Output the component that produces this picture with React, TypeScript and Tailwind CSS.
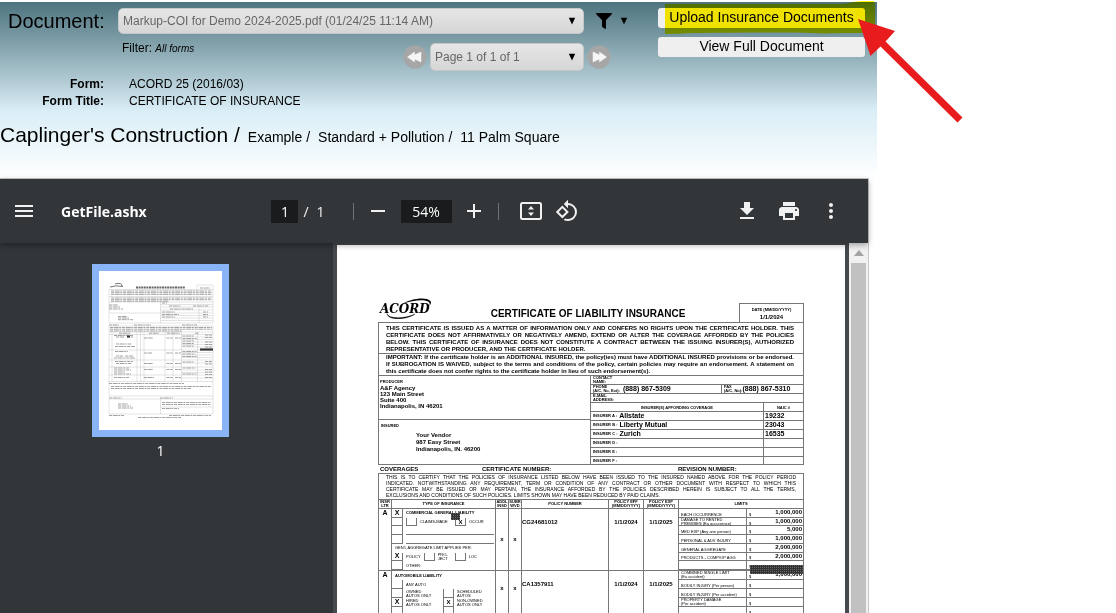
import type { ReactNode } from 'react';
import { FaFilter } from 'react-icons/fa';
import { MdAdd, MdMenu, MdMoreVert, MdPrint, MdRemove, MdRotate90DegreesCcw } from 'react-icons/md';

const insurers = [
  { letter: 'A', name: 'Allstate', naic: '19232' },
  { letter: 'B', name: 'Liberty Mutual', naic: '23043' },
  { letter: 'C', name: 'Zurich', naic: '16535' },
  { letter: 'D', name: '', naic: '' },
  { letter: 'E', name: '', naic: '' },
  { letter: 'F', name: '', naic: '' },
];

const generalLimits = [
  ['EACH OCCURRENCE', '1,000,000'],
  ['DAMAGE TO RENTED\nPREMISES (Ea occurrence)', '1,000,000'],
  ['MED EXP (Any one person)', '5,000'],
  ['PERSONAL & ADV INJURY', '1,000,000'],
  ['GENERAL AGGREGATE', '2,000,000'],
  ['PRODUCTS - COMP/OP AGG', '2,000,000'],
  ['', ''],
];

const autoLimits = [
  ['COMBINED SINGLE LIMIT\n(Ea accident)', '1,000,000'],
  ['BODILY INJURY (Per person)', ''],
  ['BODILY INJURY (Per accident)', ''],
  ['PROPERTY DAMAGE\n(Per accident)', ''],
  ['', ''],
];

function SelectBox({ label, value, className }: { label: string; value: string; className: string }) {
  return (
    <div className={`relative ${className}`}>
      <select
        aria-label={label}
        className="block w-full h-full appearance-none rounded-[5px] border border-[#c4c8ca] bg-linear-to-b from-[#e6e6e6] to-[#d6d6d6] pl-1 pr-6 text-[12px] text-[#666]"
      >
        <option>{value}</option>
      </select>
      <svg viewBox="0 0 8 8" className="absolute right-2 top-1/2 -translate-y-1/2 w-2 h-2 pointer-events-none">
        <path d="M0.800 0.800h6.400L4 7.500z" fill="#000" />
      </svg>
    </div>
  );
}

function PagerButton({ label, flip }: { label: string; flip?: boolean }) {
  return (
    <button aria-label={label} className="shrink-0">
      <svg viewBox="0 0 24 24" className={flip ? 'block w-6 h-6 rotate-180' : 'block w-6 h-6'}>
        <circle cx="12" cy="12" r="11.500" fill="#a6a6a6" />
        <path d="M4.500 12 11.500 7v3L18 7v10l-6.500-3v3z" fill="#f6f6f6" stroke="#f6f6f6" strokeWidth="0.500" strokeLinejoin="round" />
      </svg>
    </button>
  );
}

function Header() {
  return (
    <header className="mt-[2px] w-full max-w-[877px] h-[176px] pt-[6px] bg-linear-to-b from-[#4e747f] via-[#daeef6] via-62% to-white text-black">
      <div className="flex justify-between pr-3">
        <div className="grow">
          <div className="flex items-center h-[26px]">
            <span className="w-[118px] shrink-0 pl-2 text-[20px] leading-6">Document:</span>
            <SelectBox
              label="Document"
              value="Markup-COI for Demo 2024-2025.pdf (01/24/25 11:14 AM)"
              className="w-[466px] h-[26px]"
            />
            <button aria-label="Filter" className="flex items-center gap-2 ml-3">
              <FaFilter size={16} />
              <svg viewBox="0 0 8 8" className="w-2 h-2">
                <path d="M0.800 0.800h6.400L4 7.500z" />
              </svg>
            </button>
          </div>
          <div className="flex mt-[9px]">
            <p className="w-[281px] ml-[122px] text-[12px] leading-4 -mt-[3px]">
              Filter: <i className="text-[10px]">All forms</i>
            </p>
            <div className="flex items-center gap-[3px]">
              <PagerButton label="Previous" />
              <SelectBox label="Page" value="Page 1 of 1 of 1" className="w-[154px] h-[28px]" />
              <PagerButton label="Next" flip />
            </div>
          </div>
        </div>
        <div className="relative w-[207px] shrink-0 flex flex-col gap-[9px] text-[14px] leading-[18px]">
          <button className="h-5 pb-[2px] rounded-[3px] bg-[#efefef]">Upload Insurance Documents</button>
          <button className="h-5 pb-[2px] rounded-[3px] bg-[#efefef]">View Full Document</button>
          <svg viewBox="0 0 212 34" className="absolute left-[7px] -top-[7px] w-[212px] h-[34px] max-w-none mix-blend-multiply pointer-events-none">
            <path d="M0 3h175c9 0 14-3 22-3h10c3 0 3 2 3 5v23c0 3-3 4-8 4h-17c-14 0-24 1-38 0-34-1-70 0-112 0-14 0-22 1-35 1z" fill="#fff000" />
          </svg>
          <svg viewBox="0 0 106 106" className="absolute left-[199px] top-[10px] w-[106px] h-[106px] max-w-none pointer-events-none">
            <path d="M1 1 38 13 28.500 23.500 105.500 99.500 100.500 104.500 23.500 28.500 13.500 38z" fill="#e81c1c" />
          </svg>
        </div>
      </div>
      <dl className="grid grid-cols-[104px_1fr] gap-x-[25px] mt-[5px] text-[12px] leading-[17px]">
        <dt className="text-right font-bold">Form:</dt>
        <dd>ACORD 25 (2016/03)</dd>
        <dt className="text-right font-bold">Form Title:</dt>
        <dd>CERTIFICATE OF INSURANCE</dd>
      </dl>
      <nav className="flex items-baseline gap-2 mt-[13px] text-[14px] leading-6">
        <span className="text-[21px]">Caplinger's Construction /</span>
        <span>Example /</span>
        <span>Standard + Pollution /</span>
        <span>11 Palm Square</span>
      </nav>
    </header>
  );
}

function Toolbar() {
  return (
    <div className="relative z-10 shrink-0 flex items-center h-16 pl-3 pr-[25px] bg-[#323639] text-[#f1f1f1] font-['Open_Sans','Noto_Sans',sans-serif] text-[14px] shadow-[0_2px_6px_rgba(0,0,0,0.35)]">
      <div className="flex-1 flex items-center gap-[25px]">
        <button aria-label="Menu"><MdMenu size={24} /></button>
        <span className="font-bold text-white">GetFile.ashx</span>
      </div>
      <div className="flex items-center mr-[5px]">
        <input aria-label="Page number" defaultValue="1" className="w-[27px] h-[23px] bg-[#191b1c] text-center text-white" />
        <span className="ml-[5px]">/</span>
        <span className="ml-2">1</span>
        <span className="w-px h-[17px] ml-7 bg-[#707376]" />
        <button aria-label="Zoom out" className="ml-3"><MdRemove size={24} /></button>
        <input aria-label="Zoom" defaultValue="54%" className="w-[51px] h-[23px] ml-[11px] bg-[#191b1c] text-center text-white" />
        <button aria-label="Zoom in" className="ml-[10px]"><MdAdd size={24} /></button>
        <span className="w-px h-[17px] ml-3 bg-[#707376]" />
        <button aria-label="Fit to page" className="ml-5">
          <svg viewBox="0 0 24 20" className="w-6 h-5">
            <rect x="2" y="2" width="20" height="16" rx="1.500" fill="none" stroke="#f1f1f1" strokeWidth="2" />
            <path d="M12 5l3 3.500H9zM12 15l3-3.500H9z" fill="#f1f1f1" />
          </svg>
        </button>
        <button aria-label="Rotate" className="ml-3"><MdRotate90DegreesCcw size={24} /></button>
      </div>
      <div className="flex-1 flex items-center justify-end gap-[18px]">
        <button aria-label="Download">
          <svg viewBox="0 0 24 24" className="w-6 h-6">
            <path d="M19 9h-4V3H9v6H5l7 7 7-7zM5 18v2h14v-2H5z" fill="#f1f1f1" />
          </svg>
        </button>
        <button aria-label="Print"><MdPrint size={24} /></button>
        <button aria-label="More"><MdMoreVert size={24} /></button>
      </div>
    </div>
  );
}

function Thumbnail() {
  return (
    <svg viewBox="0 0 123 159" className="block w-[123px] h-[159px] bg-white">
      <g stroke="#c4c4c4" strokeWidth="0.500" fill="none">
        <path d="M10 18.500h104M10 25.500h104M10 31h104M10 42h51M10 52h104M10 55h104M10 61h104M10 63.500h104M10 79h104M10 89h104M10 96h104M10 104h104M10 110.500h104M10 125h104M10 128h104M10 143h104M61.500 136h52" />
        <path d="M10 18.500v33.500M10 55v70M10 128v15M114 14v38M114 55v88M61.500 31v21M61.500 128v15M98 14v4M98 14h16M100 37v15M61.500 33.500h52M61.500 36h52M61.500 39h52M61.500 42h52M61.500 44.500h52M61.500 47h52M61.500 49.500h52M13 61v50M38 61v50M41.500 61v50M45 61v50M66 61v50M74 61v50M82.500 61v50M98.500 61v50" />
        <path d="M82.500 66h31M82.500 68.500h31M82.500 71h31M82.500 73.500h31M82.500 76h31M82.500 81.500h31M82.500 84h31M82.500 86.500h31M82.500 92h31M82.500 99h31M82.500 101.500h31M82.500 107h31" />
      </g>
      <path d="M11 16q6-2 13-.5M16 13q7-2 7 2" stroke="#555" strokeWidth="0.800" fill="none" />
      <path d="M37 16.500h49" stroke="#666" strokeWidth="2" strokeDasharray="2 .6" />
      <g stroke="#999" strokeWidth="0.900" strokeDasharray="3 .7 5 .6 2 .8" fill="none">
        <path d="M12 20h101M12 21.700h101M12 23.400h101M12 27h101M12 28.700h101M12 30.200h58M101 17h10M10 34h9M10 36h11M10 38h14M19 45.500h9M19 47h11M19 48.700h15M63 32h5M70 35h12M94 35h16M71 38h23M63 41h13M63 43.500h17M63 46h13M104 41h5M104 43.500h5M104 46h5M10 54h10M35 54h17M83 54h15M20 62.200h12M50 62.200h10M68 62.200h13M96 62.200h4" />
        <path d="M11 56.500h102M11 58.200h102M11 60h72M15 64.500h19M17 66h8M28 66h6M17 73h16M16 75.500h20M16 80.500h13M17 85h7M26 85h8M15 87h21M16 90.500h18M17 92.500h16M15 97h15M15 99h17M15 101h11M15 103h17M15 106.500h15M45 67h9M45 82h8M45 92.500h9M45 98.500h9M45 106.500h10M67.500 67h6M76 67h6M67.500 82h6M76 82h6M67.500 92.500h6M76 92.500h6M67.500 98.500h6M76 98.500h6M67.500 106.500h6M76 106.500h6" />
        <path d="M83.500 65h12M83.500 67.500h14M83.500 70h12M83.500 72.500h12M83.500 75h12M83.500 80.500h14M83.500 83h13M83.500 85.500h14M83.500 91h11M83.500 97h13M83.500 103h14M106 64h7M106 66.500h7M106 71h7M106 73.500h7M106 76h7M106 90.500h7M106 93h7M106 98.500h7M106 101h7M106 103.500h7M106 106.500h7M10 112.500h75M12 115.500h100M12 117.500h80M10 127h13M61 127h13M19 133h10M19 135h13M19 137h15M63 131.500h49M63 133.500h49M63 137.500h17M10 144.500h15M70 144.500h42M39 146.500h43" />
      </g>
      <path d="M101 78.500h13" stroke="#333" strokeWidth="2.200" />
      <path d="M28 65.500h3" stroke="#333" strokeWidth="2" />
    </svg>
  );
}

function Lines({ lines, last, className }: { lines: string[]; last: string; className: string }) {
  return (
    <div className={className}>
      {lines.map((line) => (
        <p key={line} className="text-justify [text-align-last:justify]">{line}</p>
      ))}
      <p>{last}</p>
    </div>
  );
}

function Tick({ checked }: { checked?: boolean }) {
  return (
    <span className="w-[11px] shrink-0 self-stretch flex items-center justify-center border-x border-b border-[#777] text-[6px] font-bold">
      {checked ? 'X' : ''}
    </span>
  );
}

function CheckRow({ checked, children }: { checked?: boolean; children?: ReactNode }) {
  return (
    <div className="flex items-center min-h-0">
      <span className="w-[11px] shrink-0 self-stretch flex items-center justify-center border-r border-b border-[#777] text-[7px] font-bold">
        {checked ? 'X' : ''}
      </span>
      <div className="flex items-center gap-[3px] grow self-stretch pl-[3px]">{children}</div>
    </div>
  );
}

function Limits({ rows, className }: { rows: string[][]; className: string }) {
  return (
    <div className={className}>
      {rows.map(([name, amount], i) => (
        <div key={i} className="grid grid-cols-[67px_1fr] min-h-0 border-b border-[#777]">
          <span className="flex items-end pl-[2px] text-[4px] leading-[4px] whitespace-pre">{name}</span>
          <span className="flex items-end justify-between pl-[2px] border-l border-[#777] text-[4px] leading-[4px]">
            $
            <b className="self-start pr-px text-[6px] leading-[7px]">{amount}</b>
          </span>
        </div>
      ))}
    </div>
  );
}

function Redaction({ className }: { className: string }) {
  return (
    <svg className={className}>
      <defs>
        <pattern id="mesh" width="2" height="2" patternUnits="userSpaceOnUse">
          <rect width="2" height="2" fill="#333" />
          <rect width="1" height="1" fill="#666" />
        </pattern>
      </defs>
      <rect width="100%" height="100%" fill="url(#mesh)" />
    </svg>
  );
}

function AcordLogo() {
  return (
    <div className="relative self-start w-[57px] h-[21px]">
      <svg viewBox="0 0 57 21" className="absolute inset-0 w-[57px] h-[21px]">
        <path d="M23 5.500C30 1 46-2 50.500 3c1 1.500 0 3.500-1 5 .3-2 .5-3.500-1.500-4.500C43 1 32 2.500 23 5.500z" />
        <path d="M7 15.500c1 5.500 18 5.500 28 .5-8 6-27 7-28-.5z" stroke="#000" strokeWidth="0.400" />
      </svg>
      <span className="absolute left-0 top-[4px] font-['DejaVu_Serif',serif] italic font-bold text-[12px] leading-[14px]">ACORD</span>
    </div>
  );
}

function Certificate() {
  return (
    <article className="mx-1 px-[41px] pt-[53px] bg-white text-black">
      <div className="flex items-end justify-between h-6 pl-[2px]">
        <AcordLogo />
        <h1 className="text-[10px] leading-[16px] font-bold">CERTIFICATE OF LIABILITY INSURANCE</h1>
        <div className="w-[65px] h-[19px] border-x border-t border-[#777] text-center font-bold">
          <p className="mt-[3px] text-[4px] leading-[6px]">DATE (MM/DD/YYYY)</p>
          <p className="text-[6px] leading-[8px]">1/1/2024</p>
        </div>
      </div>

      <div className="border border-[#777]">
        <Lines
          className="h-[31px] pt-[2px] pl-[7px] pr-[9px] border-b border-[#777] text-[6px] leading-[7px] font-bold"
          lines={[
            'THIS CERTIFICATE IS ISSUED AS A MATTER OF INFORMATION ONLY AND CONFERS NO RIGHTS UPON THE CERTIFICATE HOLDER. THIS',
            'CERTIFICATE DOES NOT AFFIRMATIVELY OR NEGATIVELY AMEND, EXTEND OR ALTER THE COVERAGE AFFORDED BY THE POLICIES',
            'BELOW. THIS CERTIFICATE OF INSURANCE DOES NOT CONSTITUTE A CONTRACT BETWEEN THE ISSUING INSURER(S), AUTHORIZED',
          ]}
          last="REPRESENTATIVE OR PRODUCER, AND THE CERTIFICATE HOLDER."
        />
        <Lines
          className="h-[22px] pl-[7px] pr-[9px] border-b border-[#777] text-[6px] leading-[7px] font-bold"
          lines={[
            'IMPORTANT: If the certificate holder is an ADDITIONAL INSURED, the policy(ies) must have ADDITIONAL INSURED provisions or be endorsed.',
            'If SUBROGATION IS WAIVED, subject to the terms and conditions of the policy, certain policies may require an endorsement. A statement on',
          ]}
          last="this certificate does not confer rights to the certificate holder in lieu of such endorsement(s)."
        />
        <div className="flex h-[88px] text-[6px] leading-[6px] font-bold">
          <div className="w-[211px] shrink-0">
            <div className="h-11 border-b border-[#777] pl-px pt-[3px]">
              <p className="text-[4px] leading-[6px]">PRODUCER</p>
              <p>A&amp;F Agency</p>
              <p>123 Main Street</p>
              <p>Suite 400</p>
              <p>Indianapolis, IN 46201</p>
            </div>
            <p className="pt-[3px] pl-[2px] text-[4px] leading-[6px]">INSURED</p>
            <div className="pt-[3px] pl-[37px] leading-[7px]">
              <p>Your Vendor</p>
              <p>987 Easy Street</p>
              <p>Indianapolis, IN. 46200</p>
            </div>
          </div>
          <div className="grow border-l border-[#777]">
            <div className="h-[9px] pl-[2px] border-b border-[#777] text-[4px] leading-[4px]">CONTACT<br />NAME:</div>
            <div className="flex h-[9px] border-b border-[#777]">
              <div className="flex items-center gap-[3px] w-[130px] pl-[2px]">
                <span className="text-[4px] leading-[4px] whitespace-nowrap">PHONE<br />(A/C, No, Ext):</span>
                <span className="text-[7px]">(888) 867-5309</span>
              </div>
              <div className="flex items-center grow pl-[2px] border-l border-[#777]">
                <span className="text-[4px] leading-[4px] whitespace-nowrap">FAX<br />(A/C, No):</span>
                <span className="text-[7px]">(888) 867-5310</span>
              </div>
            </div>
            <div className="h-[9px] pl-[2px] border-b border-[#777] text-[4px] leading-[4px]">E-MAIL<br />ADDRESS:</div>
            <table className="w-full table-fixed border-separate border-spacing-0 text-left">
              <thead>
                <tr className="h-2 text-[4px] leading-[7px]">
                  <th className="p-0 text-center">INSURER(S) AFFORDING COVERAGE</th>
                  <th className="w-10 p-0 text-center border-l border-[#777]">NAIC #</th>
                </tr>
              </thead>
              <tbody>
                {insurers.map((row) => (
                  <tr key={row.letter} className="text-[7px] leading-[8px]">
                    <td className="p-0 border-t border-[#777]">
                      <div className="flex items-center gap-[2px] h-[8px] pl-[2px]">
                        <span className="text-[4px]">INSURER {row.letter} :</span>
                        <span>{row.name}</span>
                      </div>
                    </td>
                    <td className="p-0 pl-px border-t border-l border-[#777]">{row.naic}</td>
                  </tr>
                ))}
              </tbody>
            </table>
          </div>
        </div>
      </div>

      <div className="grid grid-cols-[102px_196px_1fr] h-2 pl-[2px] text-[6px] leading-[9px] font-bold">
        <span>COVERAGES</span>
        <span>CERTIFICATE NUMBER:</span>
        <span>REVISION NUMBER:</span>
      </div>

      <div className="border border-[#777]">
        <Lines
          className="h-[25px] pl-[7px] pr-[7px] text-[5px] leading-[6px]"
          lines={[
            'THIS IS TO CERTIFY THAT THE POLICIES OF INSURANCE LISTED BELOW HAVE BEEN ISSUED TO THE INSURED NAMED ABOVE FOR THE POLICY PERIOD',
            'INDICATED. NOTWITHSTANDING ANY REQUIREMENT, TERM OR CONDITION OF ANY CONTRACT OR OTHER DOCUMENT WITH RESPECT TO WHICH THIS',
            'CERTIFICATE MAY BE ISSUED OR MAY PERTAIN, THE INSURANCE AFFORDED BY THE POLICIES DESCRIBED HEREIN IS SUBJECT TO ALL THE TERMS,',
          ]}
          last="EXCLUSIONS AND CONDITIONS OF SUCH POLICIES. LIMITS SHOWN MAY HAVE BEEN REDUCED BY PAID CLAIMS."
        />
        <table className="w-full table-fixed border-separate border-spacing-0 text-[6px] leading-[7px] font-bold [&_td]:p-0 [&_td]:align-top [&_td]:border-t [&_td]:border-[#777] [&_td+td]:border-l [&_th]:p-0 [&_th]:border-t [&_th]:border-[#777] [&_th+th]:border-l">
          <thead className="text-[4px] leading-[4px]">
            <tr className="h-[9px]">
              <th className="w-[12px]">INSR<br />LTR</th>
              <th className="w-[104px]">TYPE OF INSURANCE</th>
              <th className="w-[13px]">ADDL<br />INSD</th>
              <th className="w-[13px]">SUBR<br />WVD</th>
              <th>POLICY NUMBER</th>
              <th className="w-[35px]">POLICY EFF<br />(MM/DD/YYYY)</th>
              <th className="w-[35px]">POLICY EXP<br />(MM/DD/YYYY)</th>
              <th className="w-[125px]">LIMITS</th>
            </tr>
          </thead>
          <tbody>
            <tr>
              <td className="text-center text-[7px]">A</td>
              <td>
                <div className="relative grid grid-rows-7 h-[61px] text-[4px] leading-[4px] font-normal">
                  <CheckRow checked><b>COMMERCIAL GENERAL LIABILITY</b></CheckRow>
                  <CheckRow>
                    <Tick /><span className="w-[32px]">CLAIMS-MADE</span><Tick checked /><span>OCCUR</span>
                  </CheckRow>
                  <CheckRow><span className="self-end w-[88px] border-b border-[#777]" /></CheckRow>
                  <CheckRow><span className="self-end w-[88px] border-b border-[#777]" /></CheckRow>
                  <div className="flex items-center pl-[3px]">GEN'L AGGREGATE LIMIT APPLIES PER:</div>
                  <CheckRow checked>
                    <span>POLICY</span><Tick /><span>PRO-<br />JECT</span><span className="w-px" /><Tick /><span>LOC</span>
                  </CheckRow>
                  <CheckRow>OTHER:</CheckRow>
                  <Redaction className="absolute left-[59px] top-[4px] w-[9px] h-[7px]" />
                </div>
              </td>
              <td className="text-center"><div className="pt-[27px]">x</div></td>
              <td className="text-center"><div className="pt-[27px]">x</div></td>
              <td><div className="pt-[10px]">CG24681012</div></td>
              <td className="text-center"><div className="pt-[10px]">1/1/2024</div></td>
              <td className="text-center"><div className="pt-[10px]">1/1/2025</div></td>
              <td className="font-normal">
                <div className="relative">
                  <Limits rows={generalLimits} className="grid grid-rows-7 h-[61px]" />
                  <Redaction className="absolute right-0 top-[56px] w-[53px] h-[9px]" />
                </div>
              </td>
            </tr>
            <tr>
              <td className="text-center text-[7px]">A</td>
              <td>
                <div className="grid grid-rows-5 h-[45px] text-[4px] leading-[4px] font-normal">
                  <div className="flex items-center pl-[3px]"><b>AUTOMOBILE LIABILITY</b></div>
                  <CheckRow>ANY AUTO</CheckRow>
                  <CheckRow>
                    <span className="w-[34px]">OWNED<br />AUTOS ONLY</span><Tick /><span>SCHEDULED<br />AUTOS</span>
                  </CheckRow>
                  <CheckRow checked>
                    <span className="w-[34px]">HIRED<br />AUTOS ONLY</span><Tick checked /><span>NON-OWNED<br />AUTOS ONLY</span>
                  </CheckRow>
                  <CheckRow><span className="w-[34px]" /><Tick /></CheckRow>
                </div>
              </td>
              <td className="text-center"><div className="pt-[14px]">x</div></td>
              <td className="text-center"><div className="pt-[14px]">x</div></td>
              <td><div className="pt-[10px]">CA1357911</div></td>
              <td className="text-center"><div className="pt-[10px]">1/1/2024</div></td>
              <td className="text-center"><div className="pt-[10px]">1/1/2025</div></td>
              <td className="font-normal">
                <Limits rows={autoLimits} className="grid grid-rows-5 h-[45px]" />
              </td>
            </tr>
          </tbody>
        </table>
      </div>
    </article>
  );
}

export default function App() {
  return (
    <div className="h-screen overflow-hidden flex flex-col bg-white font-['Liberation_Sans',Arial,sans-serif]">
      <Header />
      <main className="flex-1 min-h-0 flex flex-col w-full max-w-[869px] border-t border-r border-[#c8c8c8]">
        <Toolbar />
        <div className="flex-1 min-h-0 flex overflow-hidden">
          <aside className="w-[333px] shrink-0 pr-3 pt-[21px] flex flex-col items-center bg-[#323639]">
            <button aria-label="Page 1" className="border-[7px] border-[#8ab4f8]">
              <Thumbnail />
            </button>
            <span className="mt-1 font-['Open_Sans','Noto_Sans',sans-serif] text-[14px] leading-5 text-white">1</span>
          </aside>
          <section className="grow pt-[2px] bg-[#464a4e]">
            <Certificate />
          </section>
          <div className="w-[19px] shrink-0 flex flex-col items-center bg-[#f1f1f1]">
            <svg viewBox="0 0 10 6" className="w-[10px] h-[6px] my-[7px]">
              <path d="M0 6 5 0l5 6z" fill="#a3a3a3" />
            </svg>
            <div className="grow w-[15px] bg-[#c1c1c1]" />
          </div>
        </div>
      </main>
    </div>
  );
}
